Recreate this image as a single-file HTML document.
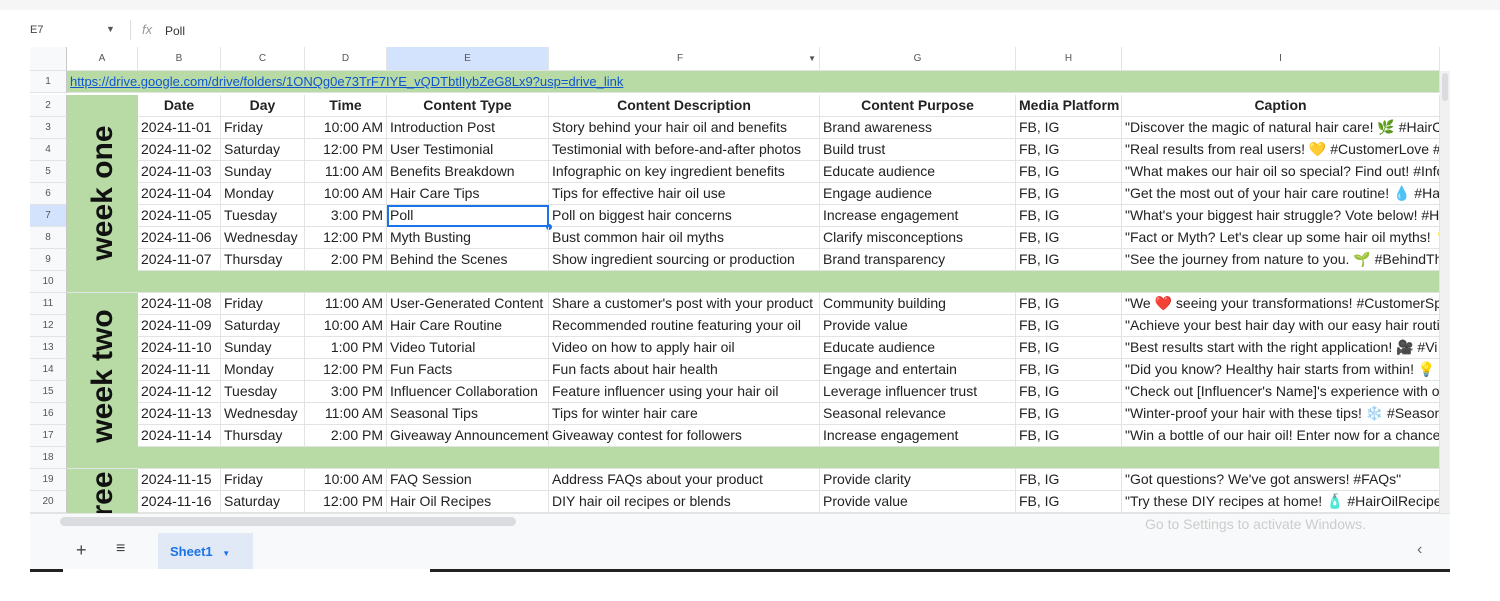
<!DOCTYPE html><html><head><style>
html,body{margin:0;width:1500px;height:601px;overflow:hidden}
body{background:#fff;font-family:"Liberation Sans",sans-serif;position:relative;color:#222}
.a{position:absolute}
.r{position:absolute;left:30px;height:22px;display:flex;font-size:14px;line-height:21px}
.r>div{box-sizing:border-box;border-right:1px solid #e2e3e3;border-bottom:1px solid #e2e3e3;white-space:nowrap;overflow:hidden;padding:0 3px;height:22px}
.c0{width:37px;text-align:center;font-size:10px!important;color:#555;background:#f8f9fa;border-right:1px solid #c7c7c7!important}
.cA{width:71px}.cB{width:83px}.cC{width:84px}.cD{width:82px;text-align:right}.cE{width:162px}.cF{width:271px}.cG{width:196px}.cH{width:106px}.cI{width:318px}
.g{background:#b8dba6}
.hd div{font-weight:bold;text-align:center}
.wk{position:absolute;left:67px;width:71px;background:#b8dba6;overflow:hidden}
.wk span{position:absolute;left:50%;top:50%;transform:translate(-50%,-50%) rotate(-90deg);font-weight:bold;font-size:30px;white-space:nowrap;color:#111}
</style></head><body>
<div class="a" style="left:0;top:0;width:1500px;height:10px;background:#f6f6f6"></div>
<div class="a" style="left:30px;top:24px;font-size:11px;color:#444">E7</div>
<div class="a" style="left:106px;top:24px;font-size:9px;color:#555">▼</div>
<div class="a" style="left:130px;top:20px;width:1px;height:20px;background:#ddd"></div>
<div class="a" style="left:142px;top:22px;font-size:13px;color:#999;font-style:italic">fx</div>
<div class="a" style="left:165px;top:24px;font-size:12px;color:#333">Poll</div>
<div class="r" style="top:47px;height:24px;line-height:23px;font-size:10px;color:#555">
<div class="c0" style="height:24px"></div>
<div class="cA" style="text-align:center;height:24px">A</div><div class="cB" style="text-align:center;height:24px">B</div><div class="cC" style="text-align:center;height:24px">C</div><div class="cD" style="text-align:center;height:24px">D</div><div class="cE" style="text-align:center;height:24px;background:#d3e3fd">E</div><div class="cF" style="text-align:center;height:24px">F <span style="float:right;font-size:8px">▼</span></div><div class="cG" style="text-align:center;height:24px">G</div><div class="cH" style="text-align:center;height:24px">H</div><div class="cI" style="text-align:center;height:24px">I</div>
</div>
<div class="r" style="top:71px"><div class="c0">1</div><div class="g" style="width:1373px;color:#1155cc;text-decoration:underline;font-size:13px">https://drive.google.com/drive/folders/1ONQg0e73TrF7IYE_vQDTbtlIybZeG8Lx9?usp=drive_link</div></div>
<div class="r hd" style="top:95px"><div class="c0" style="font-weight:normal">2</div><div class="cA"></div><div class="cB">Date</div><div class="cC">Day</div><div class="cD" style="text-align:center">Time</div><div class="cE">Content Type</div><div class="cF">Content Description</div><div class="cG">Content Purpose</div><div class="cH" style="text-align:left">Media Platform</div><div class="cI">Caption</div></div>

<div class="r" style="top:117px"><div class="c0">3</div><div class="cA"></div><div class="cB">2024-11-01</div><div class="cC">Friday</div><div class="cD">10:00 AM</div><div class="cE">Introduction Post</div><div class="cF">Story behind your hair oil and benefits</div><div class="cG">Brand awareness</div><div class="cH">FB, IG</div><div class="cI">"Discover the magic of natural hair care! 🌿 #HairCare</div></div>
<div class="r" style="top:139px"><div class="c0">4</div><div class="cA"></div><div class="cB">2024-11-02</div><div class="cC">Saturday</div><div class="cD">12:00 PM</div><div class="cE">User Testimonial</div><div class="cF">Testimonial with before-and-after photos</div><div class="cG">Build trust</div><div class="cH">FB, IG</div><div class="cI">"Real results from real users! 💛 #CustomerLove #</div></div>
<div class="r" style="top:161px"><div class="c0">5</div><div class="cA"></div><div class="cB">2024-11-03</div><div class="cC">Sunday</div><div class="cD">11:00 AM</div><div class="cE">Benefits Breakdown</div><div class="cF">Infographic on key ingredient benefits</div><div class="cG">Educate audience</div><div class="cH">FB, IG</div><div class="cI">"What makes our hair oil so special? Find out! #Info</div></div>
<div class="r" style="top:183px"><div class="c0">6</div><div class="cA"></div><div class="cB">2024-11-04</div><div class="cC">Monday</div><div class="cD">10:00 AM</div><div class="cE">Hair Care Tips</div><div class="cF">Tips for effective hair oil use</div><div class="cG">Engage audience</div><div class="cH">FB, IG</div><div class="cI">"Get the most out of your hair care routine! 💧 #Hair</div></div>
<div class="r" style="top:205px"><div class="c0" style="background:#d3e3fd">7</div><div class="cA"></div><div class="cB">2024-11-05</div><div class="cC">Tuesday</div><div class="cD">3:00 PM</div><div class="cE" style="outline:2px solid #1a73e8;outline-offset:-2px">Poll</div><div class="cF">Poll on biggest hair concerns</div><div class="cG">Increase engagement</div><div class="cH">FB, IG</div><div class="cI">"What's your biggest hair struggle? Vote below! #H</div></div>
<div class="a" style="left:546px;top:224px;width:6px;height:6px;border-radius:50%;background:#1a73e8"></div>
<div class="r" style="top:227px"><div class="c0">8</div><div class="cA"></div><div class="cB">2024-11-06</div><div class="cC">Wednesday</div><div class="cD">12:00 PM</div><div class="cE">Myth Busting</div><div class="cF">Bust common hair oil myths</div><div class="cG">Clarify misconceptions</div><div class="cH">FB, IG</div><div class="cI">"Fact or Myth? Let's clear up some hair oil myths! 💡</div></div>
<div class="r" style="top:249px"><div class="c0">9</div><div class="cA"></div><div class="cB">2024-11-07</div><div class="cC">Thursday</div><div class="cD">2:00 PM</div><div class="cE">Behind the Scenes</div><div class="cF">Show ingredient sourcing or production</div><div class="cG">Brand transparency</div><div class="cH">FB, IG</div><div class="cI">"See the journey from nature to you. 🌱 #BehindThe</div></div>
<div class="r" style="top:271px"><div class="c0">10</div><div class="g" style="width:1373px"></div></div>
<div class="r" style="top:293px"><div class="c0">11</div><div class="cA"></div><div class="cB">2024-11-08</div><div class="cC">Friday</div><div class="cD">11:00 AM</div><div class="cE">User-Generated Content</div><div class="cF">Share a customer's post with your product</div><div class="cG">Community building</div><div class="cH">FB, IG</div><div class="cI">"We ❤️ seeing your transformations! #CustomerSpo</div></div>
<div class="r" style="top:315px"><div class="c0">12</div><div class="cA"></div><div class="cB">2024-11-09</div><div class="cC">Saturday</div><div class="cD">10:00 AM</div><div class="cE">Hair Care Routine</div><div class="cF">Recommended routine featuring your oil</div><div class="cG">Provide value</div><div class="cH">FB, IG</div><div class="cI">"Achieve your best hair day with our easy hair routi</div></div>
<div class="r" style="top:337px"><div class="c0">13</div><div class="cA"></div><div class="cB">2024-11-10</div><div class="cC">Sunday</div><div class="cD">1:00 PM</div><div class="cE">Video Tutorial</div><div class="cF">Video on how to apply hair oil</div><div class="cG">Educate audience</div><div class="cH">FB, IG</div><div class="cI">"Best results start with the right application! 🎥 #Vi</div></div>
<div class="r" style="top:359px"><div class="c0">14</div><div class="cA"></div><div class="cB">2024-11-11</div><div class="cC">Monday</div><div class="cD">12:00 PM</div><div class="cE">Fun Facts</div><div class="cF">Fun facts about hair health</div><div class="cG">Engage and entertain</div><div class="cH">FB, IG</div><div class="cI">"Did you know? Healthy hair starts from within! 💡 #</div></div>
<div class="r" style="top:381px"><div class="c0">15</div><div class="cA"></div><div class="cB">2024-11-12</div><div class="cC">Tuesday</div><div class="cD">3:00 PM</div><div class="cE">Influencer Collaboration</div><div class="cF">Feature influencer using your hair oil</div><div class="cG">Leverage influencer trust</div><div class="cH">FB, IG</div><div class="cI">"Check out [Influencer's Name]'s experience with o</div></div>
<div class="r" style="top:403px"><div class="c0">16</div><div class="cA"></div><div class="cB">2024-11-13</div><div class="cC">Wednesday</div><div class="cD">11:00 AM</div><div class="cE">Seasonal Tips</div><div class="cF">Tips for winter hair care</div><div class="cG">Seasonal relevance</div><div class="cH">FB, IG</div><div class="cI">"Winter-proof your hair with these tips! ❄️ #Season</div></div>
<div class="r" style="top:425px"><div class="c0">17</div><div class="cA"></div><div class="cB">2024-11-14</div><div class="cC">Thursday</div><div class="cD">2:00 PM</div><div class="cE">Giveaway Announcement</div><div class="cF">Giveaway contest for followers</div><div class="cG">Increase engagement</div><div class="cH">FB, IG</div><div class="cI">"Win a bottle of our hair oil! Enter now for a chance</div></div>
<div class="r" style="top:447px"><div class="c0">18</div><div class="g" style="width:1373px"></div></div>
<div class="r" style="top:469px"><div class="c0">19</div><div class="cA"></div><div class="cB">2024-11-15</div><div class="cC">Friday</div><div class="cD">10:00 AM</div><div class="cE">FAQ Session</div><div class="cF">Address FAQs about your product</div><div class="cG">Provide clarity</div><div class="cH">FB, IG</div><div class="cI">"Got questions? We've got answers! #FAQs"</div></div>
<div class="r" style="top:491px"><div class="c0">20</div><div class="cA"></div><div class="cB">2024-11-16</div><div class="cC">Saturday</div><div class="cD">12:00 PM</div><div class="cE">Hair Oil Recipes</div><div class="cF">DIY hair oil recipes or blends</div><div class="cG">Provide value</div><div class="cH">FB, IG</div><div class="cI">"Try these DIY recipes at home! 🧴 #HairOilRecipes</div></div>

<div class="wk" style="top:95px;height:176px"><span style="margin-top:10px">week one</span></div>
<div class="wk" style="top:293px;height:154px"><span style="margin-top:6px">week two</span></div>
<div class="wk" style="top:469px;height:44px"><span style="top:80px">week three</span></div>

<div class="a" style="left:1440px;top:71px;width:10px;height:444px;background:#f1f1f1"></div>
<div class="a" style="left:1442px;top:73px;width:6px;height:28px;background:#dadce0;border-radius:3px"></div>
<div class="a" style="left:30px;top:513px;width:1420px;height:20px;background:#f8f9fa;border-top:1px solid #e2e3e3"></div>
<div class="a" style="left:60px;top:517px;width:456px;height:9px;background:#dadce0;border-radius:5px"></div>
<div class="a" style="left:1145px;top:516px;font-size:14px;color:#ccc">Go to Settings to activate Windows.</div>
<div class="a" style="left:30px;top:533px;width:1420px;height:36px;background:#f8f9fa"></div>
<div class="a" style="left:76px;top:540px;font-size:18px;color:#444">+</div>
<div class="a" style="left:116px;top:540px;font-size:16px;color:#444">≡</div>
<div class="a" style="left:158px;top:533px;width:95px;height:36px;background:#e1e9f7"></div>
<div class="a" style="left:170px;top:544px;font-size:13px;font-weight:bold;color:#1a73e8">Sheet1 <span style="font-size:8px;margin-left:6px">▼</span></div>
<div class="a" style="left:1417px;top:541px;font-size:16px;color:#666">‹</div>
<div class="a" style="left:30px;top:569px;width:33px;height:3px;background:#222"></div>
<div class="a" style="left:430px;top:569px;width:1020px;height:3px;background:#222"></div>
</body></html>
